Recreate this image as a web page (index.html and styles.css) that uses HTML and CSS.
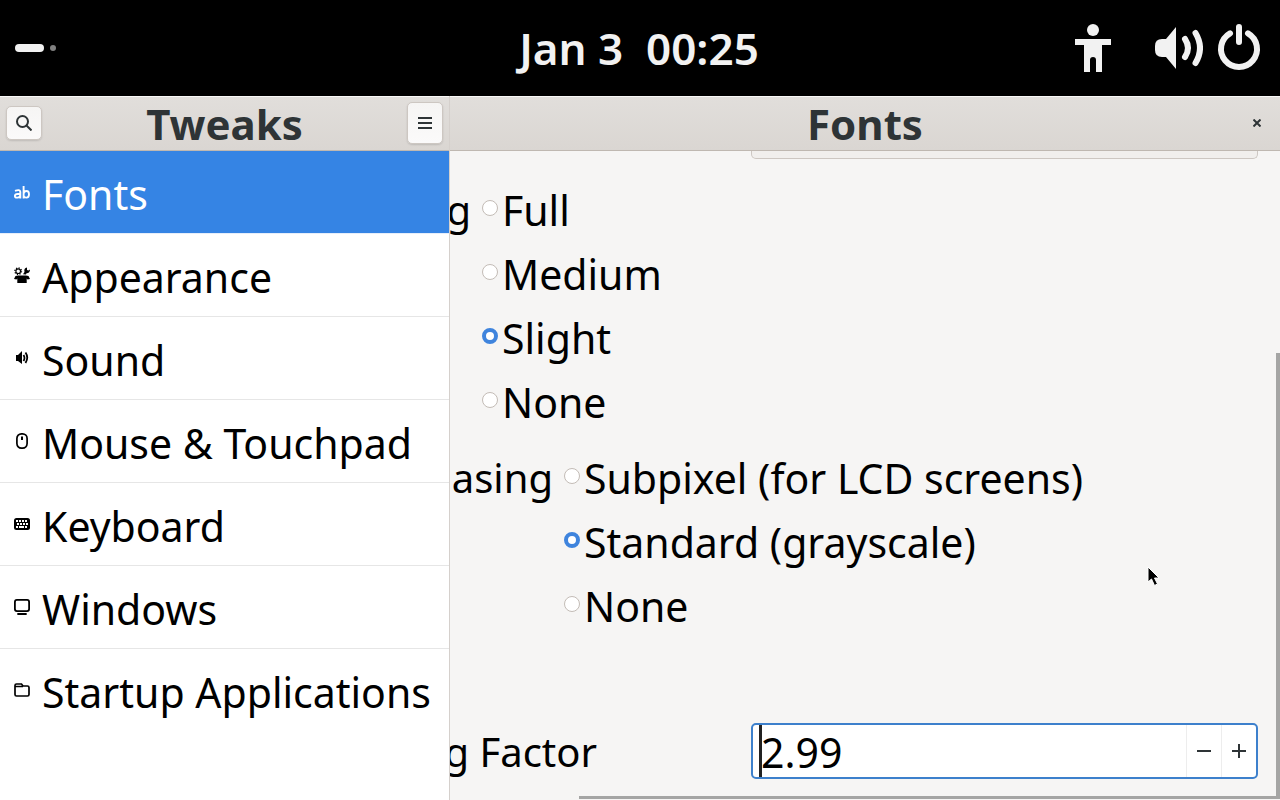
FILE: index.html
```html
<!DOCTYPE html>
<html lang="en">
<head>
<meta charset="utf-8">
<title>Tweaks</title>
<link rel="stylesheet" href="styles.css">
</head>
<body>
<header class="topbar">
  <div class="workspaces"><span class="pill"></span><span class="dot"></span></div>
  <time class="clock">Jan 3&nbsp; 00:25</time>
  <div class="status">
    <svg class="access" width="48" height="48" viewBox="0 0 16 16" fill="#f2f2f2"><circle cx="8" cy="2" r="2"/><path d="M2 5h12v2h-3v9H9v-4a1 1 0 0 0-2 0v4H5V7H2z"/></svg>
    <svg width="48" height="48" viewBox="0 0 48 48"><path d="M7 15h4L21 3v42L11 33H7q-7 0-7-7v-4q0-7 7-7z" fill="#f2f2f2"/><path d="M30 15q6 9 0 18M40.500 9q9 15 0 30" fill="none" stroke="#f2f2f2" stroke-width="6" stroke-linecap="round"/></svg>
    <svg width="48" height="48" viewBox="0 0 48 48" fill="none" stroke="#f2f2f2" stroke-width="6" stroke-linecap="round"><path d="M24 3v15M15 9.300a18 18 0 1 0 18 0"/></svg>
  </div>
</header>
<div class="window">
  <aside class="sidebar">
    <div class="titlebar">
      <button class="tool" aria-label="Search"><svg width="16" height="16" viewBox="0 0 16 16" fill="none" stroke="#2e3436" stroke-width="2"><circle cx="6.500" cy="6.500" r="5.500"/><path d="M10.500 10.500l5 5"/></svg></button>
      <h1 class="title">Tweaks</h1>
      <button class="tool menu" aria-label="Menu"><svg width="16" height="16" viewBox="0 0 16 16" fill="#2e3436"><path d="M1 2h14v2H1zM1 7h14v2H1zM1 12h14v2H1z"/></svg></button>
    </div>
    <nav class="nav">
      <a class="item active" href="#fonts"><svg width="16" height="16" viewBox="0 0 16 16" fill="none" stroke="currentColor" stroke-width="1.900"><path d="M1 6.900q5-2 5.300 1V14.500M6 10H3.500Q.9 10 .9 12T3.500 13.600Q6 13.500 6.300 11M9.600 2V14.500M9.600 9.500q.4-2.500 2.900-2.500 2.500 0 2.500 3.300T12.500 13.600q-2.500 0-2.900-2"/></svg>Fonts</a>
      <a class="item" href="#appearance"><svg width="16" height="16" viewBox="0 0 16 16" fill="currentColor"><circle cx="4.200" cy="4.200" r="2.300" fill="none" stroke="currentColor" stroke-width="1.100"/><circle cx="4.200" cy="4.200" r="3.300" fill="none" stroke="currentColor" stroke-width="1.300" stroke-dasharray="1.200 1.390"/><path d="M9 7.200L10.500 5Q9.500 1 13 .5V3l1.400.6L16 2.500Q16 6 12.500 6.300L12 7.500zM1.500 9 4 8.500h8l2.500.5L16 12l-2.500.5-.8-1V16H3.300v-4.500l-.8 1L0 12z"/></svg>Appearance</a>
      <a class="item" href="#sound"><svg width="16" height="16" viewBox="0 0 16 16"><path d="M2 5h2l4-4v13l-4-3H2z" fill="currentColor"/><path d="M9.500 5q2 3 0 6M11.500 2.500q3.500 5 0 10.500" fill="none" stroke="currentColor" stroke-width="1.800"/></svg>Sound</a>
      <a class="item" href="#mouse"><svg width="16" height="16" viewBox="0 0 16 16" fill="none" stroke="currentColor" stroke-width="1.700"><rect x="2.900" y=".9" width="10.200" height="14.200" rx="4.500"/><path d="M8 3.500V7" stroke-width="2"/></svg>Mouse &amp; Touchpad</a>
      <a class="item" href="#keyboard"><svg width="16" height="16" viewBox="0 0 16 16"><rect y="2" width="16" height="12" rx="2.500" fill="currentColor"/><path d="M2 5h12M3 8h11" stroke="#fff" stroke-width="1.800" stroke-dasharray="2 1"/><path d="M2 11h2m1 0h5m1 0h2" stroke="#fff" stroke-width="1.800"/></svg>Keyboard</a>
      <a class="item" href="#windows"><svg width="16" height="16" viewBox="0 0 16 16" fill="none" stroke="currentColor" stroke-width="1.800"><rect x=".9" y=".9" width="14.200" height="11.200" rx="2"/><path d="M4 15h8" stroke-linecap="round"/></svg>Windows</a>
      <a class="item" href="#startup"><svg width="16" height="16" viewBox="0 0 16 16" fill="none" stroke="currentColor" stroke-width="1.700"><path d="M1 4V12.500Q1 14 2.500 14h11q1.500 0 1.500-1.500v-7Q15 4 13.500 4H9L7.500 2h-5Q1 2 1 3.500V4.500h8"/></svg>Startup Applications</a>
    </nav>
  </aside>
  <main class="panel">
    <div class="titlebar centered">
      <h2 class="title">Fonts</h2>
      <button class="close" aria-label="Close"><svg width="8" height="8" viewBox="0 0 8 8" stroke="#2e3436" stroke-width="2"><path d="M.5.5l7 7M7.500.5l-7 7"/></svg></button>
    </div>
    <div class="content">
      <button class="font-button" aria-label="Font"></button>
      <fieldset class="row hinting">
        <span class="label">g</span>
        <div class="options">
          <label class="option"><input type="radio" name="hinting">Full</label>
          <label class="option"><input type="radio" name="hinting">Medium</label>
          <label class="option"><input type="radio" name="hinting" checked>Slight</label>
          <label class="option"><input type="radio" name="hinting">None</label>
        </div>
      </fieldset>
      <fieldset class="row antialiasing">
        <span class="label">asing</span>
        <div class="options">
          <label class="option"><input type="radio" name="antialias">Subpixel (for LCD screens)</label>
          <label class="option"><input type="radio" name="antialias" checked>Standard (grayscale)</label>
          <label class="option"><input type="radio" name="antialias">None</label>
        </div>
      </fieldset>
      <div class="factor">
        <label class="label" for="factor">g Factor</label>
        <div class="spin">
          <span class="caret"></span>
          <input id="factor" class="value" type="text" value="2.99">
          <button class="step" aria-label="Decrease"><svg width="14" height="14" viewBox="0 0 14 14" stroke="#2e3436" stroke-width="2"><path d="M0 7h14"/></svg></button>
          <button class="step" aria-label="Increase"><svg width="14" height="14" viewBox="0 0 14 14" stroke="#2e3436" stroke-width="2"><path d="M0 7h14M7 0v14"/></svg></button>
        </div>
      </div>
      <span class="scroll-y"></span>
      <span class="scroll-x"></span>
    </div>
  </main>
</div>
<svg class="pointer" width="14" height="22" viewBox="0 0 14 22"><path d="M2 1v15l3.500-3 3 6.500 3-1.500-3-6H13z" fill="#000" stroke="#fff" stroke-width="1"/></svg>
</body>
</html>
```
FILE: styles.css
```css
* { box-sizing: border-box; }
body {
  margin: 0;
  height: 100vh;
  display: flex;
  flex-direction: column;
  overflow: hidden;
  font-family: "Noto Sans", sans-serif;
  font-size: 41px;
  color: #000;
  background: #f6f5f4;
}
button { padding: 0; font: inherit; display: flex; align-items: center; justify-content: center; }
svg { display: block; flex: none; }

.topbar {
  flex: none;
  height: 96px;
  display: grid;
  grid-template-columns: 1fr auto 1fr;
  align-items: center;
  padding: 0 17px 0 15px;
  background: #000;
  color: #f2f2f2;
}
.workspaces { display: flex; align-items: center; gap: 6px; }
.pill { width: 29px; height: 8px; border-radius: 4px; background: #f2f2f2; }
.dot { width: 6px; height: 6px; border-radius: 50%; background: #808080; }
.clock { font-size: 44px; font-weight: 600; }
.status { display: flex; justify-content: flex-end; gap: 12px; }
.access { margin-right: 26px; }

.window { flex: 1; min-height: 0; display: flex; }
.sidebar { flex: none; width: 450px; border-right: 1px solid #d5d0cc; background: #fff; }
.titlebar {
  height: 55px;
  display: flex;
  align-items: center;
  justify-content: space-between;
  padding: 0 6px 2px;
  border-top: 1px solid #f9f8f7;
  border-bottom: 1px solid #bfb8b1;
  background: linear-gradient(#e1dedb, #dad6d2);
}
.title { flex: 1; margin: 0; padding-top: 2px; font-size: 42px; font-weight: 700; line-height: 53px; text-align: center; color: #2e3436; }
.centered { padding-left: 40px; }
.tool {
  width: 36px;
  height: 34px;
  border: 1px solid #cdc7c2;
  border-radius: 5px;
  background: linear-gradient(#f6f5f4, #fbfafa);
  box-shadow: 0 1px 2px #0002;
}
.menu { height: 42px; }
.close { width: 34px; height: 34px; border: 0; background: none; }

.item {
  height: 83px;
  display: flex;
  align-items: center;
  gap: 12px;
  padding: 3px 0 0 14px;
  border-bottom: 1px solid #e6e6e6;
  color: #000;
  text-decoration: none;
  white-space: nowrap;
}
.item svg { margin-bottom: 3px; }
.item:last-child { border-color: transparent; }
.item.active { background: #3584e4; border-color: #e6eefa; color: #fff; }

.panel { flex: 1; min-width: 0; display: flex; flex-direction: column; }
.content { flex: 1; position: relative; overflow: hidden; padding-right: 22px; }
.font-button {
  width: 507px;
  height: 8px;
  margin-left: auto;
  border: 1px solid #cdc7c2;
  border-top: 0;
  border-radius: 0 0 5px 5px;
  background: #f1efed;
}
.row { display: flex; gap: 12px; margin: 0; padding: 0; border: 0; min-width: 0; line-height: 64px; white-space: nowrap; }
.hinting { margin: 19px 0 12px; }
.label { display: flex; justify-content: flex-end; font-size: 40px; white-space: nowrap; }
.hinting .label { width: 21px; }
.antialiasing .label { width: 103px; }
.factor .label { width: 147px; }
.options { margin-left: -1px; }
.option { display: flex; align-items: center; }
.option input {
  appearance: none;
  width: 16px;
  height: 16px;
  margin: 0 4px 4px 0;
  border: 1px solid #c3bcb6;
  border-radius: 50%;
  background: #fff;
}
.option input:checked { border: 4px solid #3f84dd; }
.factor { display: flex; align-items: center; justify-content: space-between; margin-top: 84px; }
.factor .label { padding-top: 2px; }
.spin {
  position: relative;
  width: 507px;
  height: 56px;
  display: flex;
  border: 2px solid #3d80cc;
  border-radius: 5px;
  background: #fff;
}
.value { flex: 1; min-width: 0; padding: 2px 0 0 8px; border: 0; outline: 0; background: none; font: inherit; color: #000; }
.caret { position: absolute; left: 6px; top: 0; width: 3px; height: 52px; background: #222; }
.step { width: 35px; border: 0; border-left: 1px solid #ededed; background: none; }
.scroll-y { position: absolute; right: 0; top: 202px; bottom: 1px; width: 4px; background: #a5a5a4; }
.scroll-x { position: absolute; left: 129px; right: 0; bottom: 1px; height: 3px; background: #a5a5a4; }
.pointer { position: absolute; left: 1146px; top: 566px; }
```
